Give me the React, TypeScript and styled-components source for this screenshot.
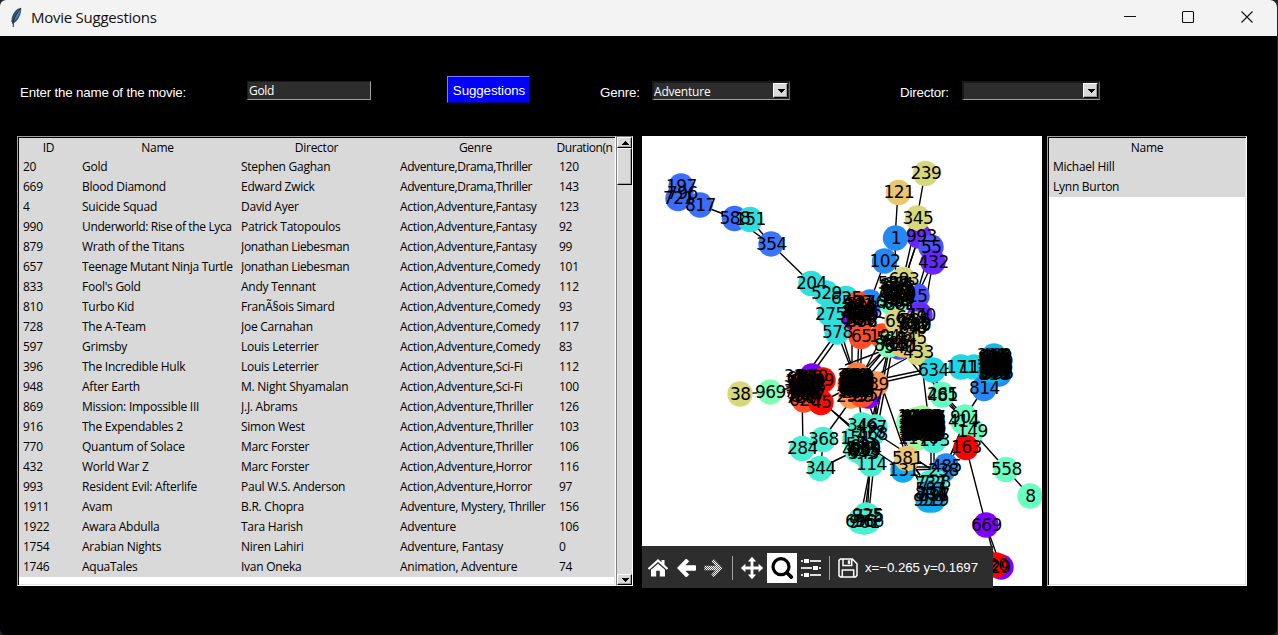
import React from "react";
import styled, { createGlobalStyle } from "styled-components";

const GlobalStyle = createGlobalStyle`
  * { box-sizing: border-box; }
  body { margin: 0; background: #20232c; overflow: hidden; }
`;

const ui = `"Open Sans", "Noto Sans", sans-serif`;
const arial = `"Liberation Sans", Arial, sans-serif`;

const Window = styled.div`
  width: 1277px;
  height: 635px;
  background: #000;
  border-radius: 6px 7px 6px 6px;
  overflow: hidden;
  display: flex;
  flex-direction: column;
`;

const TitleBar = styled.header`
  height: 36px;
  flex: none;
  background: #f3f3f3;
  display: flex;
  align-items: center;
  padding-left: 8px;
`;

const Title = styled.h1`
  margin: 0 auto 0 7px;
  padding-bottom: 2px;
  font: 400 15px/32px ${ui};
  letter-spacing: -0.25px;
  color: #111;
`;

const WindowButtons = styled.div`
  display: flex;
  svg { display: block; }
`;

const Form = styled.form`
  display: flex;
  align-items: flex-start;
  height: 27px;
  margin: 40px 0 33px 20px;
`;

const Label = styled.label<{ $width: number }>`
  width: ${(p) => p.$width}px;
  flex: none;
  padding-top: 9px;
  font: 13.33px/16px ${arial};
  letter-spacing: -0.18px;
  color: #fff;
  white-space: nowrap;
`;

const Entry = styled.div`
  width: 124px;
  height: 19px;
  margin-top: 5px;
  padding-left: 1px;
  background: #2d2d2d;
  border: 1px solid #1b1b1b;
  border-right-color: #a0a0a0;
  border-bottom-color: #a0a0a0;
  color: #fff;
  font: 12px/18px ${ui};
  letter-spacing: -0.3px;
`;

const SuggestButton = styled.button`
  width: 83px;
  height: 27px;
  margin: 0 70px 0 76px;
  padding: 2px 0 0 1px;
  background: #0000fe;
  border: 1px solid #7a7aff;
  border-right-color: #000080;
  border-bottom-color: #000080;
  color: #fff;
  font: 13.33px/23px ${arial};
  letter-spacing: -0.1px;
`;

const Combo = styled.div<{ $after?: number }>`
  display: flex;
  justify-content: space-between;
  width: 138px;
  height: 19px;
  margin: 5px ${(p) => p.$after ?? 0}px 0 0;
  background: #2d2d2d;
  border: 2px solid #181818;
  border-bottom: 1px solid #a0a0a0;
  border-right: 1px solid #666;
  color: #fff;
  font: 12px/17px ${ui};
  letter-spacing: -0.2px;
`;

const ComboArrow = styled.span`
  width: 15px;
  height: 15px;
  margin-right: 1px;
  background: #d9d9d9;
  border: 1px solid #fff;
  border-right-color: #000;
  border-bottom-color: #000;
  box-shadow: inset -1px -1px #a0a0a0;
  display: grid;
  place-items: center;
`;

const Content = styled.main`
  display: flex;
  height: 450px;
  padding-left: 17px;
`;

const Tree = styled.section<{ $width: number }>`
  width: ${(p) => p.$width}px;
  height: 450px;
  flex: none;
  overflow: hidden;
  background: #fff;
  border: 1px solid #a0a0a0;
  border-right-color: #fff;
  border-bottom-color: #fff;
  box-shadow: inset 1px 1px #000, inset -1px -1px #e3e3e3;
  padding: 1px;
`;

const Row = styled.div<{ $columns: string; $head?: boolean }>`
  display: grid;
  grid-template-columns: ${(p) => p.$columns};
  height: ${(p) => (p.$head ? 19 : 20)}px;
  background: #d9d9d9;
  font: 12px/${(p) => (p.$head ? 19 : 20)}px ${ui};
  letter-spacing: -0.25px;
  color: #000;
  text-align: ${(p) => (p.$head ? "center" : "left")};
  overflow: hidden;
`;

const Cell = styled.span<{ $tracking?: number }>`
  display: block;
  margin: 0 4px;
  overflow: hidden;
  white-space: nowrap;
  letter-spacing: ${(p) => p.$tracking ?? -0.25}px;
`;

const HeadCell = styled(Cell)`
  margin: 0 1px;
`;

const Scrollbar = styled.div`
  width: 17px;
  height: 450px;
  flex: none;
  display: flex;
  flex-direction: column;
  background: #d9d9d9;
  border: 1px solid #828282;
  border-right-color: #fff;
  border-bottom-color: #fff;
`;

const Bevel = styled.div<{ $height: number; $push?: boolean }>`
  height: ${(p) => p.$height}px;
  margin-top: ${(p) => (p.$push ? "auto" : "0")};
  flex: none;
  background: #d9d9d9;
  border: 1px solid #fff;
  border-right-color: #000;
  border-bottom-color: #000;
  box-shadow: inset -1px -1px #a0a0a0;
  display: grid;
  place-items: center;
`;

const Plot = styled.section`
  position: relative;
  width: 400px;
  height: 450px;
  flex: none;
  margin: 0 5px 0 9px;
  background: #fff;
  > svg { display: block; }
`;

const PlotLabel = styled.text`
  font: 17px "DejaVu Sans", sans-serif;
  letter-spacing: -0.6px;
  text-anchor: middle;
  fill: #000;
`;

const PlotToolbar = styled.nav`
  position: absolute;
  left: 0;
  top: 410px;
  width: 351px;
  height: 42px;
  padding: 1px 0 0 1px;
  background: #2d2d2d;
  display: flex;
  align-items: center;
  color: #fff;
  font: 13.33px/16px ${arial};
`;

const Tool = styled.span<{ $active?: boolean; $width: number }>`
  width: ${(p) => p.$width}px;
  height: 30px;
  flex: none;
  display: grid;
  place-items: center;
  background: ${(p) => (p.$active ? "#fff" : "transparent")};
`;

const Divider = styled.i<{ $left: number; $right: number }>`
  width: 1px;
  height: 24px;
  margin: 0 ${(p) => p.$right}px 0 ${(p) => p.$left}px;
  background: #a0a0a0;
`;

const Coordinates = styled.span`
  white-space: nowrap;
  margin-left: 3px;
  letter-spacing: -0.09px;
`;

const movies: string[][] = [
  ["20", "Gold", "Stephen Gaghan", "Adventure,Drama,Thriller", "120"],
  ["669", "Blood Diamond", "Edward Zwick", "Adventure,Drama,Thriller", "143"],
  ["4", "Suicide Squad", "David Ayer", "Action,Adventure,Fantasy", "123"],
  ["990", "Underworld: Rise of the Lyca", "Patrick Tatopoulos", "Action,Adventure,Fantasy", "92"],
  ["879", "Wrath of the Titans", "Jonathan Liebesman", "Action,Adventure,Fantasy", "99"],
  ["657", "Teenage Mutant Ninja Turtle", "Jonathan Liebesman", "Action,Adventure,Comedy", "101"],
  ["833", "Fool's Gold", "Andy Tennant", "Action,Adventure,Comedy", "112"],
  ["810", "Turbo Kid", "FranÃ§ois Simard", "Action,Adventure,Comedy", "93"],
  ["728", "The A-Team", "Joe Carnahan", "Action,Adventure,Comedy", "117"],
  ["597", "Grimsby", "Louis Leterrier", "Action,Adventure,Comedy", "83"],
  ["396", "The Incredible Hulk", "Louis Leterrier", "Action,Adventure,Sci-Fi", "112"],
  ["948", "After Earth", "M. Night Shyamalan", "Action,Adventure,Sci-Fi", "100"],
  ["869", "Mission: Impossible III", "J.J. Abrams", "Action,Adventure,Thriller", "126"],
  ["916", "The Expendables 2", "Simon West", "Action,Adventure,Thriller", "103"],
  ["770", "Quantum of Solace", "Marc Forster", "Action,Adventure,Thriller", "106"],
  ["432", "World War Z", "Marc Forster", "Action,Adventure,Horror", "116"],
  ["993", "Resident Evil: Afterlife", "Paul W.S. Anderson", "Action,Adventure,Horror", "97"],
  ["1911", "Avam", "B.R. Chopra", "Adventure, Mystery, Thriller", "156"],
  ["1922", "Awara Abdulla", "Tara Harish", "Adventure", "106"],
  ["1754", "Arabian Nights", "Niren Lahiri", "Adventure, Fantasy", "0"],
  ["1746", "AquaTales", "Ivan Oneka", "Animation, Adventure", "74"],
];

const tracking: Record<string, number> = {
  "Adventure,Drama,Thriller": -0.42,
  "Adventure, Mystery, Thriller": -0.34,
  "Underworld: Rise of the Lyca": -0.36,
  "Teenage Mutant Ninja Turtle": -0.33,
  "Jonathan Liebesman": -0.33,
};

type Node = [x: number, y: number, color: string, label?: string, labelShift?: number];

const BLUE = "#3b6cfc", SKY = "#2489f5", AZURE = "#12abf0", CYAN = "#1cd8e4", AQUA = "#2edfdc";
const TURQ = "#48efd2", MINT = "#68fcc0", LIME = "#7fffb4", PALE = "#a4f89c", KHAKI = "#d7d77c";
const SAND = "#ebc670", ORANGE = "#ff964f", CORAL = "#ff7b40", TOMATO = "#ff4d27", RED = "#ff0a05";
const PURPLE = "#8000ff", VIOLET = "#6529fd", INDIGO = "#4c55fa";

const nodes: Node[] = [
  [681, 186, BLUE, "197"], [681, 193, BLUE, "796", 1], [678, 198.5, BLUE, "721"], [700, 205, BLUE, "817"],
  [734.5, 218.5, BLUE, "588"], [750, 219.5, AQUA, "151"], [771, 244, "#3a76fb", "354"],
  [811, 283.5, AQUA, "204"], [826, 293, AQUA, "529"], [846, 298.5, AQUA, "625"],
  [830, 314, AQUA, "275"], [837, 332, AQUA, "578"],
  [898.5, 192.5, SAND, "121"], [925.5, 173.5, KHAKI, "239"],
  [919, 236, VIOLET, "993", 2], [917.5, 218, KHAKI, "345"],
  [895.5, 238, SKY, "1"], [884.5, 261, SKY, "102"],
  [931, 247, INDIGO, "55"], [933, 262, VIOLET, "432"],
  [870, 302, SKY, "276"], [917, 296, INDIGO, "15"], [920, 315, VIOLET, "770"],
  [855, 318, PURPLE, "807"], [866, 312, VIOLET, "916"],
  [893, 291, LIME], [899, 300, LIME], [891, 302, MINT], [903.5, 279.5, KHAKI, "693"],
  [858, 304, TOMATO], [863, 309, TOMATO], [861, 321, TOMATO, "676"], [861, 336.5, TOMATO, "65"],
  [882, 336, TOMATO, "104", 2], [899, 347, INDIGO, "540"], [897, 321, KHAKI, "693", 3],
  [915, 324, KHAKI, "830"], [911, 328, SAND, "196"], [911, 338, KHAKI, "345"],
  [918, 352.5, KHAKI, "433"], [889, 345, LIME, "864"], [903, 345, SAND, "121"],
  [812, 376, PURPLE, "870"], [801, 387, RED], [807, 395, RED], [804, 400, TOMATO, "620"],
  [804, 382, RED], [817, 382, RED], [823, 380, RED, "289", -5], [821, 402.5, RED, "45"],
  [868, 396, PURPLE, "397"], [876, 384, ORANGE, "539", -3], [857, 375, CORAL, "529"],
  [851, 396, ORANGE, "295"], [862, 395, TOMATO, "335"], [850, 384, CORAL], [864, 386, CORAL],
  [740, 394, KHAKI, "38"], [770, 392, LIME, "969"],
  [802, 448.5, TURQ, "284"], [823, 439.5, TURQ, "368"], [820, 468.5, TURQ, "344"],
  [862, 425, TURQ, "346"], [875, 427, TURQ, "497", -4], [855, 438.5, TURQ, "151"],
  [870, 432, TURQ, "178"], [872, 434, TURQ, "468"], [857, 450, TURQ, "421"],
  [865, 449, TURQ, "909"], [863, 453, TURQ, "343"], [871, 464, TURQ, "114"],
  [866, 515, TURQ, "925", 1], [868, 516, TURQ, "775"], [860, 521, TURQ, "696"],
  [868, 521, TURQ, "966"], [864, 522, TURQ, "961"],
  [915, 436, PURPLE], [909, 422, LIME], [915, 420, PALE], [922, 418, PALE, "1200"],
  [928, 421, KHAKI], [932, 425, PALE], [918, 438, PALE, "1170"], [934, 440.5, TURQ, "173"],
  [903, 470, AZURE, "131"], [907, 458.5, SAND, "581"],
  [946, 466, SKY, "485"], [943, 470, SKY, "238"], [935, 482, TURQ, "728"], [930, 483, TURQ, "737"],
  [930, 493, AZURE, "804"], [934, 495, AZURE, "397"], [928, 500, AZURE, "959"], [933, 500, AZURE, "919"],
  [933, 370, CYAN, "634"], [961, 367, CYAN, "171"], [974, 367, CYAN, "111"],
  [990, 365, AZURE], [984, 388.5, SKY, "814"], [994, 356, "#13b9eb"], [999, 374, SKY],
  [996, 371, AZURE], [990, 370, "#13b9eb"],
  [942, 395, MINT, "481"], [942, 394.5, MINT, "265"], [965, 417, MINT, "901"],
  [963, 421.5, MINT, "414"], [972, 431, MINT, "149"], [966, 447.5, "#ff0000", "163"],
  [1006, 469.5, "#69ffc1", "558"], [1030, 496, "#69ffc1", "8"],
  [986, 525, PURPLE, "669"], [1001, 567, PURPLE, "29", -1], [996, 565, "#ff0000", "20", 2],
];

// [x1, y1, x2, y2] of each link between two nodes
const edges: number[][] = [
  [700, 205, 734, 218], [734, 218, 771, 244], [750, 219, 771, 244], [771, 244, 811, 283], [681, 190, 700, 205],
  [925, 173, 917, 218], [898, 192, 895, 238], [895, 238, 896, 290], [885, 261, 870, 302],
  [919, 236, 905, 278], [919, 236, 898, 300], [917, 218, 903, 280], [933, 262, 917, 296], [933, 262, 924, 312],
  [931, 247, 915, 300], [870, 302, 898, 319], [860, 312, 915, 326],
  [837, 332, 801, 382], [842, 332, 806, 382], [837, 332, 857, 384], [841, 332, 857, 384], [852, 330, 852, 384],
  [859, 335, 857, 384], [862, 335, 860, 384], [889, 345, 850, 384], [889, 345, 856, 384], [895, 345, 862, 384],
  [883, 336, 857, 384], [918, 352, 860, 384], [890, 345, 875, 424], [889, 345, 871, 425], [893, 345, 878, 425],
  [903, 345, 942, 394], [899, 347, 922, 375], [857, 384, 933, 368], [857, 388, 933, 371], [845, 365, 890, 348],
  [740, 394, 770, 392], [770, 392, 802, 386], [802, 390, 803, 448], [810, 392, 870, 442], [818, 398, 870, 445],
  [825, 400, 857, 384], [823, 439, 857, 392], [823, 439, 821, 468], [820, 468, 857, 450],
  [857, 384, 862, 424], [862, 384, 876, 424], [875, 392, 877, 426], [879, 390, 873, 426],
  [883, 389, 907, 458], [868, 446, 903, 470], [871, 430, 943, 477],
  [871, 464, 860, 520], [871, 464, 864, 520], [874, 464, 868, 520], [870, 464, 867, 520],
  [922, 365, 928, 415], [942, 395, 965, 420], [944, 395, 968, 420], [938, 395, 962, 417],
  [933, 370, 942, 395], [933, 370, 961, 367], [961, 367, 990, 366], [984, 388, 965, 417],
  [984, 388, 994, 370], [925, 360, 942, 394], [972, 431, 1006, 469], [1006, 469, 1030, 496],
  [966, 447, 986, 525], [986, 525, 996, 565], [986, 525, 1001, 567], [963, 425, 946, 466],
  [966, 430, 942, 468], [966, 435, 938, 480], [934, 441, 934, 480], [931, 441, 931, 480],
  [907, 458, 928, 500], [907, 458, 932, 490], [909, 458, 933, 497], [903, 470, 946, 469], [903, 467, 946, 467],
  [911, 456, 943, 477], [903, 430, 907, 458],
];

type Heap = { x: number; y: number; w: number; h: number; count: number; start: number };

const heaps: Heap[] = [
  { x: 897, y: 294, w: 8, h: 20, count: 17, start: 537 },
  { x: 860, y: 312, w: 6, h: 18, count: 12, start: 587 },
  { x: 856, y: 384, w: 7, h: 15, count: 36, start: 208 },
  { x: 805, y: 387, w: 12, h: 19, count: 19, start: 328 },
  { x: 922, y: 426, w: 8, h: 17, count: 40, start: 1016 },
  { x: 995, y: 365, w: 6, h: 18, count: 24, start: 331 },
  { x: 914, y: 323, w: 5, h: 12, count: 5, start: 649 },
  { x: 864, y: 448, w: 6, h: 8, count: 5, start: 543 },
  { x: 932, y: 492, w: 3, h: 7, count: 2, start: 597 },
  { x: 896, y: 341, w: 9, h: 6, count: 3, start: 511 },
];

const heapLabels = heaps.flatMap((heap) =>
  Array.from({ length: heap.count }, (_, i) => {
    const span = heap.start > 1000 ? 900 : 999 - heap.start;
    return {
      x: heap.x + (((i * 0.618) % 1) - 0.5) * heap.w,
      y: heap.y + (((i + 0.5) / heap.count) - 0.5) * heap.h * 1.15,
      text: String(heap.start + ((i * 137) % span)),
    };
  })
);

const Triangle = ({ up }: { up?: boolean }) => (
  <svg width="8" height="4" viewBox="0 0 8 4" shapeRendering="crispEdges">
    <path d={up ? "M0 4 4 0 8 4Z" : "M0 0h8L4 4Z"} fill="#000" />
  </svg>
);

const Feather = () => (
  <svg width="16" height="22" viewBox="0 0 16 22">
    <path d="M13.2 0.8C8.2 1.5 3.5 6.8 3.3 14.5L5.8 16.2C10.3 13.2 13.6 7.5 13.2.8Z" fill="#34506f" />
    <path d="M12.7 1.4C8.5 3.4 6.4 8.2 5.4 14.5c3.9-3 7.3-7.6 7.3-13.1Z" fill="#4c78a8" />
    <path d="M12.8 1.2C8.4 6 6.1 10.5 5.4 15.5L5.2 20" fill="none" stroke="#1f2933" strokeWidth="1" />
    <path d="M3.5 13.5 4.5 17.3 5.8 16" fill="#333" />
  </svg>
);

const Graph = () => (
  <svg width="400" height="450" viewBox="642 136 400 450">
    <g stroke="#000" strokeWidth="1.4">
      {edges.map(([x1, y1, x2, y2], i) => <line key={i} x1={x1} y1={y1} x2={x2} y2={y2} />)}
    </g>
    {nodes.map(([x, y, color], i) => <circle key={i} cx={x} cy={y} r="12.7" fill={color} />)}
    {heapLabels.map((l, i) => <PlotLabel key={i} x={l.x} y={l.y + 5.5}>{l.text}</PlotLabel>)}
    {nodes.map(([x, y, , label, shift = 0], i) =>
      label && <PlotLabel key={i} x={x + shift + 0.3} y={y + 5.5}>{label}</PlotLabel>
    )}
  </svg>
);

const HomeIcon = () => (
  <svg width="22" height="20" viewBox="0 0 22 20" fill="#fff">
    <path d="M11 1 .8 10.2l1.4 1.5L11 4l8.8 7.7 1.4-1.5-3.7-3.4V2h-3v2.2Z" />
    <path d="m11 5.7-7 6.1V18.5h5.2v-5.7h3.6v5.7H18v-6.7Z" />
  </svg>
);

const arrowPath = "M10.3 1 1.5 10l8.8 9 2.4-2.4-4.3-4.4H19.5V7.8H8.4l4.3-4.4Z";

const BackIcon = () => (
  <svg width="21" height="20" viewBox="0 0 21 20">
    <path d={arrowPath} fill="#fff" stroke="#fff" strokeWidth="1" strokeLinejoin="round" />
  </svg>
);

const ForwardIcon = () => (
  <svg width="21" height="20" viewBox="0 0 21 20">
    <defs>
      <pattern id="stipple" width="2" height="2" patternUnits="userSpaceOnUse">
        <rect width="2" height="2" fill="#5a5a5a" />
        <path d="M0 0h1v1H0zM1 1h1v1H1z" fill="#fff" shapeRendering="crispEdges" />
      </pattern>
    </defs>
    <path d="M10.7 1 19.5 10l-8.8 9-2.4-2.4 4.3-4.4H1.5V7.8h11.1L8.3 3.4Z" fill="url(#stipple)" />
  </svg>
);

const MoveIcon = () => (
  <svg width="24" height="24" viewBox="0 0 24 24" fill="#fff">
    <path d="m12 .8 4.2 4.6h-2.8v5.2h5.2V7.8l4.6 4.2-4.6 4.2v-2.8h-5.2v5.2h2.8L12 23.2l-4.2-4.6h2.8v-5.2H5.4v2.8L.8 12l4.6-4.2v2.8h5.2V5.4H7.8Z" />
  </svg>
);

const MagnifierIcon = () => (
  <svg width="24" height="24" viewBox="0 0 24 24" fill="none" stroke="#000" strokeLinecap="round">
    <circle cx="11" cy="10.7" r="8" strokeWidth="3.2" />
    <path d="m17.2 17 4.2 4.1" strokeWidth="3.6" />
  </svg>
);

const SlidersIcon = () => (
  <svg width="20" height="20" viewBox="0 0 20 20" shapeRendering="crispEdges">
    <path d="M0 3h20M0 10h20M0 17h20" stroke="#ddd" strokeWidth="2" />
    <path d="M2 0h7v6H2zM11 7h7v6h-7zM2 14h7v6H2z" fill="#2d2d2d" />
    <path d="M3 1h5v4H3zM12 8h5v4h-5zM3 15h5v4H3z" fill="#fff" />
  </svg>
);

const SaveIcon = () => (
  <svg width="20" height="20" viewBox="0 0 20 20" fill="none" stroke="#fff" strokeWidth="1.5">
    <path d="M2.4 1h11.9L19 5.8v11.7L17.6 19H2.4L1 17.6V2.4ZM5 1v6.5h8.7V1M4.3 19v-7h11.4v7" />
    <path d="M9.8 2.3h2.4v3.6H9.8z" fill="#fff" stroke="none" />
  </svg>
);

const movieColumns = "59px 159px 159px 159px 59px";

export default function App() {
  return (
    <>
      <GlobalStyle />
      <Window>
        <TitleBar>
          <Feather />
          <Title>Movie Suggestions</Title>
          <WindowButtons>
            <svg width="176" height="36" viewBox="0 0 176 36" fill="none" stroke="#111" strokeWidth="1.1">
              <path d="M23 16.5h12" />
              <rect x="81.5" y="11.5" width="11" height="11" rx="1" />
              <path d="m140.5 11.5 11 11m0-11-11 11" />
            </svg>
          </WindowButtons>
        </TitleBar>

        <Form>
          <Label $width={227}>Enter the name of the movie:</Label>
          <Entry>Gold</Entry>
          <SuggestButton type="button">Suggestions</SuggestButton>
          <Label $width={52}>Genre:</Label>
          <Combo $after={110}>Adventure<ComboArrow><Triangle /></ComboArrow></Combo>
          <Label $width={62}>Director:</Label>
          <Combo><span /><ComboArrow><Triangle /></ComboArrow></Combo>
        </Form>

        <Content>
          <Tree $width={599}>
            <Row $columns={movieColumns} $head>
              {["ID", "Name", "Director", "Genre"].map((h) => <HeadCell key={h}>{h}</HeadCell>)}
              <HeadCell $tracking={-0.45}>Duration(n</HeadCell>
            </Row>
            {movies.map((movie) => (
              <Row key={movie[0]} $columns={movieColumns}>
                {movie.map((value, i) => <Cell key={i} $tracking={tracking[value]}>{value}</Cell>)}
              </Row>
            ))}
          </Tree>
          <Scrollbar>
            <Bevel $height={11}><Triangle up /></Bevel>
            <Bevel $height={37} />
            <Bevel $height={11} $push><Triangle /></Bevel>
          </Scrollbar>

          <Plot>
            <Graph />
            <PlotToolbar>
              <Tool $width={30}><HomeIcon /></Tool>
              <Tool $width={27}><BackIcon /></Tool>
              <Tool $width={27}><ForwardIcon /></Tool>
              <Divider $left={5} $right={4} />
              <Tool $width={30}><MoveIcon /></Tool>
              <Tool $width={30} $active><MagnifierIcon /></Tool>
              <Tool $width={28}><SlidersIcon /></Tool>
              <Divider $left={4} $right={4} />
              <Tool $width={28}><SaveIcon /></Tool>
              <Coordinates>x=−0.265 y=0.1697</Coordinates>
            </PlotToolbar>
          </Plot>

          <Tree $width={200}>
            <Row $columns="1fr" $head><HeadCell>Name</HeadCell></Row>
            <Row $columns="1fr"><Cell>Michael Hill</Cell></Row>
            <Row $columns="1fr"><Cell>Lynn Burton</Cell></Row>
          </Tree>
        </Content>
      </Window>
    </>
  );
}
